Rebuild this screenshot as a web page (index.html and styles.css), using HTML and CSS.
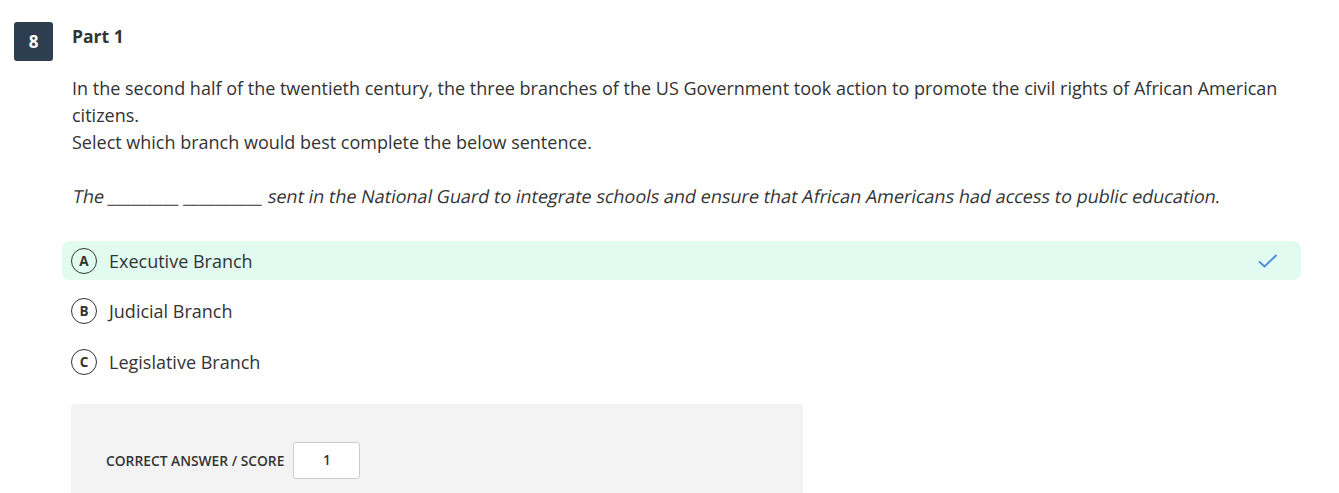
FILE: index.html
```html
<!DOCTYPE html>
<html>
<head>
<meta charset="utf-8">
<link rel="stylesheet" href="styles.css">
</head>
<body>
<div class="question">
  <div class="badge">8</div>
  <div class="content">
    <div class="part">Part 1</div>
    <div class="stem">
      <p>In the second half of the twentieth century, the three branches of the US Government took action to promote the civil rights of African American citizens.<br>Select which branch would best complete the below sentence.</p>
      <p><span class="slanted">The _________ __________ sent in the National Guard to integrate schools and ensure that African Americans had access to public education.</span></p>
    </div>
    <div class="options">
      <div class="option correct">
        <span class="letter">A</span><span class="label">Executive Branch</span>
        <svg class="check" width="22" height="16" viewBox="0 0 22 16"><path d="M2 8.5 L7.5 13.5 L19.5 2" fill="none" stroke="#4a8ad4" stroke-width="1.8"/></svg>
      </div>
      <div class="option">
        <span class="letter">B</span><span class="label">Judicial Branch</span>
      </div>
      <div class="option">
        <span class="letter">C</span><span class="label">Legislative Branch</span>
      </div>
    </div>
    <div class="score">
      <span class="score-label">CORRECT ANSWER / SCORE</span>
      <span class="score-box">1</span>
    </div>
  </div>
</div>
</body>
</html>
```
FILE: styles.css
```css
html, body {
  margin: 0;
  padding: 0;
  background: #fff;
}
body {
  font-family: "Open Sans", "Liberation Sans", sans-serif;
  color: #333;
}
.question {
  display: flex;
  padding: 22px 0 0 14px;
}
.badge {
  width: 39px;
  height: 39px;
  flex: none;
  background: #2d3e50;
  color: #fff;
  border-radius: 3px;
  display: flex;
  align-items: center;
  justify-content: center;
  font-weight: 700;
  font-size: 17px;
}
.content {
  margin-left: 19px;
  width: 1229px;
}
.part {
  font-weight: 700;
  font-size: 17.5px;
  line-height: 28px;
}
.stem {
  margin-top: 25px;
  font-size: 18px;
  line-height: 27px;
}
.stem p {
  margin: 0 0 27px 0;
}
.stem p:last-child {
  margin-bottom: 0;
}
.slanted {
  display: inline-block;
  white-space: nowrap;
  transform: skewX(-11deg);
  transform-origin: 0 75%;
}
.options {
  margin-top: 31px;
  display: flex;
  flex-direction: column;
  gap: 11.5px;
}
.option {
  display: flex;
  align-items: center;
  height: 39px;
  margin-left: -10px;
  padding: 0 10px 0 9px;
  border-radius: 8px;
  font-size: 18px;
}
.option.correct {
  background: #e1fbf0;
}
.letter {
  width: 24px;
  height: 24px;
  border: 1px solid #333;
  border-radius: 50%;
  display: flex;
  align-items: center;
  justify-content: center;
  font-size: 13.5px;
  font-weight: 700;
  flex: none;
}
.label {
  margin-left: 12px;
}
.check {
  margin-left: auto;
  margin-right: 12px;
}
.score {
  margin-top: 23px;
  margin-left: -1px;
  width: 732px;
  height: 100px;
  background: #f3f3f3;
  border-radius: 4px;
  display: flex;
  align-items: center;
  padding-left: 35px;
  box-sizing: border-box;
  padding-top: 12px;
}
.score-label {
  font-size: 13.8px;
  font-weight: 600;
}
.score-box {
  margin-left: 9px;
  width: 67px;
  height: 37px;
  box-sizing: border-box;
  border: 1px solid #ccc;
  border-radius: 3px;
  background: #fff;
  display: flex;
  align-items: center;
  justify-content: center;
  font-size: 13.5px;
  font-weight: 600;
}
```
